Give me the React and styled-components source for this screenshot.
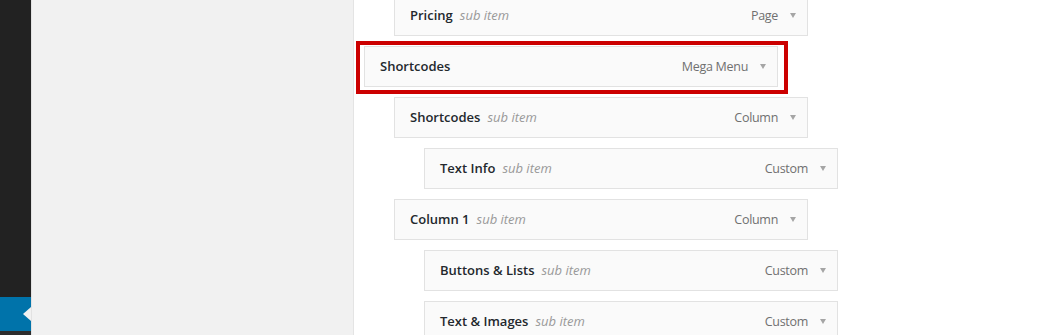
import React from 'react';
import styled, { createGlobalStyle } from 'styled-components';

const GlobalStyle = createGlobalStyle`
  html, body {
    margin: 0;
    padding: 0;
    background: #fff;
  }
  body {
    font-family: "Open Sans", "Liberation Sans", sans-serif;
    font-size: 13px;
  }
`;

const Page = styled.div`
  display: flex;
  height: 335px;
  overflow: hidden;
`;

const Sidebar = styled.div`
  display: flex;
  flex-direction: column;
  width: 31px;
  flex-shrink: 0;
  background: #222;
`;

const SidebarSpacer = styled.div`
  flex: 1;
`;

const SidebarCurrent = styled.div`
  position: relative;
  height: 34px;
  background: #0073aa;

  &::after {
    content: '';
    position: absolute;
    right: 0;
    top: 50%;
    margin-top: -7px;
    border-style: solid;
    border-width: 7px 8px 7px 0;
    border-color: transparent #f1f1f1 transparent transparent;
  }
`;

const SidebarBottom = styled.div`
  height: 4px;
  background: #2d2d2d;
`;

const Gutter = styled.div`
  width: 322px;
  flex-shrink: 0;
  background: #f1f1f1;
  border-right: 1px solid #e4e4e4;
  box-shadow: inset 1px 0 0 #e2e2e2;
`;

const Panel = styled.div`
  flex: 1;
  background: #fff;
  padding: 0 0 0 10px;
  overflow: hidden;
`;

const MenuList = styled.ul`
  list-style: none;
  margin: -5px 0 0;
  padding: 0;
  display: flex;
  flex-direction: column;
  gap: 10px;
`;

const ItemBar = styled.li`
  position: relative;
  box-sizing: border-box;
  display: flex;
  align-items: center;
  width: 414px;
  height: 41px;
  margin-left: ${p => p.depth * 30}px;
  padding: 0 11px 1px 15px;
  background: #fafafa;
  border: 1px solid #e2e2e2;

  ${p => p.highlight && `
    &::after {
      content: '';
      position: absolute;
      top: -6px;
      left: -9px;
      right: -11px;
      bottom: -8px;
      border: 4px solid #cc0000;
      pointer-events: none;
    }
  `}
`;

const Title = styled.span`
  font-weight: 600;
  color: #23282d;
  font-size: 13px;
`;

const SubLabel = styled.span`
  margin-left: 7px;
  font-style: italic;
  color: #999;
  font-size: 13px;
`;

const ItemType = styled.span`
  margin-left: auto;
  color: #707070;
  font-size: 12.5px;
  letter-spacing: -0.3px;
`;

const Arrow = styled.span`
  margin-left: 12px;
  width: 0;
  height: 0;
  border-style: solid;
  border-width: 5px 3.5px 0 3.5px;
  border-color: #a5a5a5 transparent transparent transparent;
`;

const items = [
  { title: 'Pricing', sub: true, type: 'Page', depth: 1 },
  { title: 'Shortcodes', sub: false, type: 'Mega Menu', depth: 0, highlight: true },
  { title: 'Shortcodes', sub: true, type: 'Column', depth: 1 },
  { title: 'Text Info', sub: true, type: 'Custom', depth: 2 },
  { title: 'Column 1', sub: true, type: 'Column', depth: 1 },
  { title: 'Buttons & Lists', sub: true, type: 'Custom', depth: 2 },
  { title: 'Text & Images', sub: true, type: 'Custom', depth: 2 },
];

export default function App() {
  return (
    <>
      <GlobalStyle />
      <Page>
        <Sidebar>
          <SidebarSpacer />
          <SidebarCurrent />
          <SidebarBottom />
        </Sidebar>
        <Gutter />
        <Panel>
          <MenuList>
            {items.map((item, i) => (
              <ItemBar key={i} depth={item.depth} highlight={item.highlight}>
                <Title>{item.title}</Title>
                {item.sub && <SubLabel>sub item</SubLabel>}
                <ItemType>{item.type}</ItemType>
                <Arrow />
              </ItemBar>
            ))}
          </MenuList>
        </Panel>
      </Page>
    </>
  );
}
